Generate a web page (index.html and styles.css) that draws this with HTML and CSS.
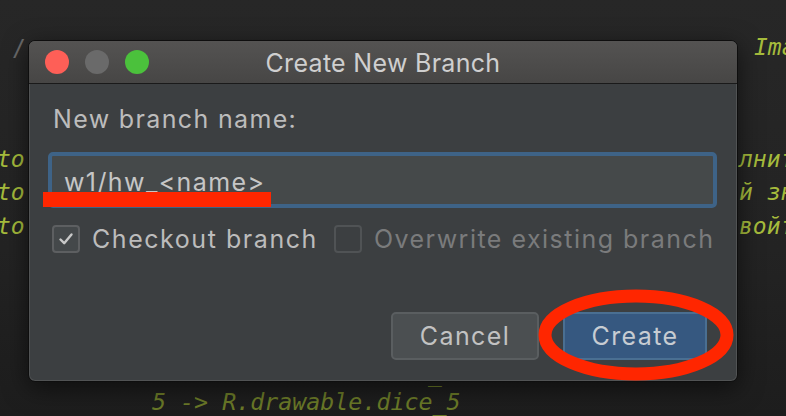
FILE: index.html
```html
<!DOCTYPE html>
<html>
<head>
<meta charset="utf-8">
<link rel="stylesheet" href="styles.css">
</head>
<body>
<div class="stage">
  <div class="code">
    <span class="c c-slash">/</span>
    <span class="c c-ima">Ima</span>
    <span class="c c-to1">to</span>
    <span class="c c-to2">to</span>
    <span class="c c-to3">to</span>
    <span class="c c-r1">лнит</span>
    <span class="c c-r2">й зн</span>
    <span class="c c-r3">войт</span>
    <span class="c c-us">_</span>
    <span class="c c-bottom">5 -&gt; R.drawable.dice_5</span>
  </div>

  <div class="dialog">
    <div class="titlebar">
      <div class="lights">
        <span class="light red"></span>
        <span class="light gray"></span>
        <span class="light green"></span>
      </div>
      <div class="title">Create New Branch</div>
      <div></div>
    </div>
    <div class="body">
      <div class="label">New branch name:</div>
      <div class="field"><span class="value">w1/hw_&lt;name&gt;</span></div>
      <div class="checks">
        <label class="check">
          <span class="box checked">
            <svg viewBox="0 0 20 20" width="20" height="20"><path d="M4.5 10.5 L8.2 14.2 L15.5 5.5" fill="none" stroke="#c8c8c8" stroke-width="2.4" stroke-linecap="round" stroke-linejoin="round"/></svg>
          </span>
          <span class="check-text">Checkout branch</span>
        </label>
        <label class="check disabled">
          <span class="box"></span>
          <span class="check-text">Overwrite existing branch</span>
        </label>
      </div>
      <div class="buttons">
        <div class="btn cancel">Cancel</div>
        <div class="btn create">Create</div>
      </div>
    </div>
  </div>

  <div class="mark-underline"></div>
  <svg class="mark-ellipse" width="200" height="96" viewBox="0 0 200 96">
    <ellipse cx="100" cy="47" rx="91" ry="39" fill="none" stroke="#ff2600" stroke-width="13"/>
  </svg>
</div>
</body>
</html>
```

FILE: styles.css
```css
* { box-sizing: border-box; }
html, body { margin: 0; padding: 0; }
body {
  background: #242424;
  font-family: "Inter", "Liberation Sans", sans-serif;
}
.stage {
  position: relative;
  width: 786px;
  height: 416px;
  overflow: hidden;
  padding: 40px 0 0 28px;
  background: linear-gradient(180deg, #272727 0%, #232323 60%, #1d1d1d 100%);
}
.code .c {
  position: absolute;
  font-family: "DejaVu Sans Mono", "Liberation Mono", monospace;
  font-style: italic;
  font-size: 23px;
  line-height: 1;
  color: #a6bc3c;
  white-space: pre;
}
.code .c-slash { left: 12px; top: 37px; color: #6a6a6a; font-style: normal; }
.c-ima { left: 754px; top: 36px; }
.c-to1 { left: -3px; top: 148px; }
.c-to2 { left: -3px; top: 181px; }
.c-to3 { left: -3px; top: 215px; }
.c-r1 { left: 739px; top: 148px; }
.c-r2 { left: 739px; top: 181px; }
.c-r3 { left: 739px; top: 215px; }
.code .c-us { left: 428px; top: 362px; color: #6b7a28; }
.code .c-bottom { left: 152px; top: 390px; color: #6b7a28; font-size: 23.3px; }

.dialog {
  position: relative;
  width: 710px;
  height: 342px;
  border-radius: 7px;
  background: #3c3f41;
  border: 1px solid #0e0e0e;
  box-shadow: 0 0 0 1px rgba(120,120,120,0.35) inset, 0 6px 24px rgba(0,0,0,0.55);
  overflow: hidden;
  display: flex;
  flex-direction: column;
}
.titlebar {
  height: 43px;
  flex: none;
  background: linear-gradient(180deg, #545352 0%, #474645 100%);
  border-bottom: 1px solid #1a1a1a;
  display: grid;
  grid-template-columns: 1fr auto 1fr;
  align-items: center;
  padding-left: 16px;
  padding-right: 16px;
}
.lights { display: flex; gap: 16px; }
.light { width: 24px; height: 24px; border-radius: 50%; display: block; }
.light.red { background: #fe5f57; }
.light.gray { background: #6a6a6a; }
.light.green { background: #4bc13c; }
.title {
  color: #cfcfcf;
  font-size: 25px;
  letter-spacing: 0.3px;
  line-height: 30px;
  margin-top: 1px;
}
.body {
  flex: 1;
  padding: 20px 20px 21px 19px;
  display: flex;
  flex-direction: column;
}
.label {
  color: #bcbcbc;
  font-size: 25px;
  line-height: 30px;
  padding-left: 5px;
  letter-spacing: 1.35px;
}
.field {
  margin-top: 18px;
  height: 56px;
  border: 4px solid #3e6387;
  border-radius: 5px;
  background: #45494a;
  display: flex;
  align-items: center;
  padding-left: 12px;
  padding-top: 3px;
}
.value {
  color: #c6c6c6;
  font-size: 25px;
  letter-spacing: 1.4px;
}
.checks {
  margin-top: 16px;
  display: flex;
  gap: 16px;
  padding-left: 4px;
}
.check { display: flex; flex: none; align-items: center; gap: 12px; }
.box {
  flex: none;
  width: 28px;
  height: 28px;
  border: 2px solid #5d5f61;
  border-radius: 4px;
  background: #43474a;
  display: flex;
  align-items: center;
  justify-content: center;
}
.box.checked { background: #44484a; }
.check-text {
  color: #bcbcbc;
  font-size: 25px;
  letter-spacing: 1.55px;
  line-height: 30px;
  white-space: nowrap;
}
.check.disabled .box { background: transparent; border-color: #505355; }
.check.disabled .check-text { color: #7a7b7c; letter-spacing: 1.48px; }
.buttons {
  margin-top: auto;
  display: flex;
  justify-content: flex-end;
  gap: 24px;
  padding-right: 10px;
}
.btn {
  height: 48px;
  border-radius: 5px;
  display: flex;
  align-items: center;
  justify-content: center;
  font-size: 25px;
  color: #c2c2c2;
  letter-spacing: 1.4px;
}
.btn.cancel {
  width: 148px;
  background: #4b4f51;
  border: 2px solid #5a5e60;
}
.btn.create {
  width: 144px;
  background: #365880;
  border: 2px solid #4a6f92;
  color: #c7ccd2;
}

.mark-underline {
  position: absolute;
  left: 43px;
  top: 192px;
  width: 228px;
  height: 15px;
  background: #ff2600;
}
.mark-ellipse {
  position: absolute;
  left: 536px;
  top: 288px;
}
```
